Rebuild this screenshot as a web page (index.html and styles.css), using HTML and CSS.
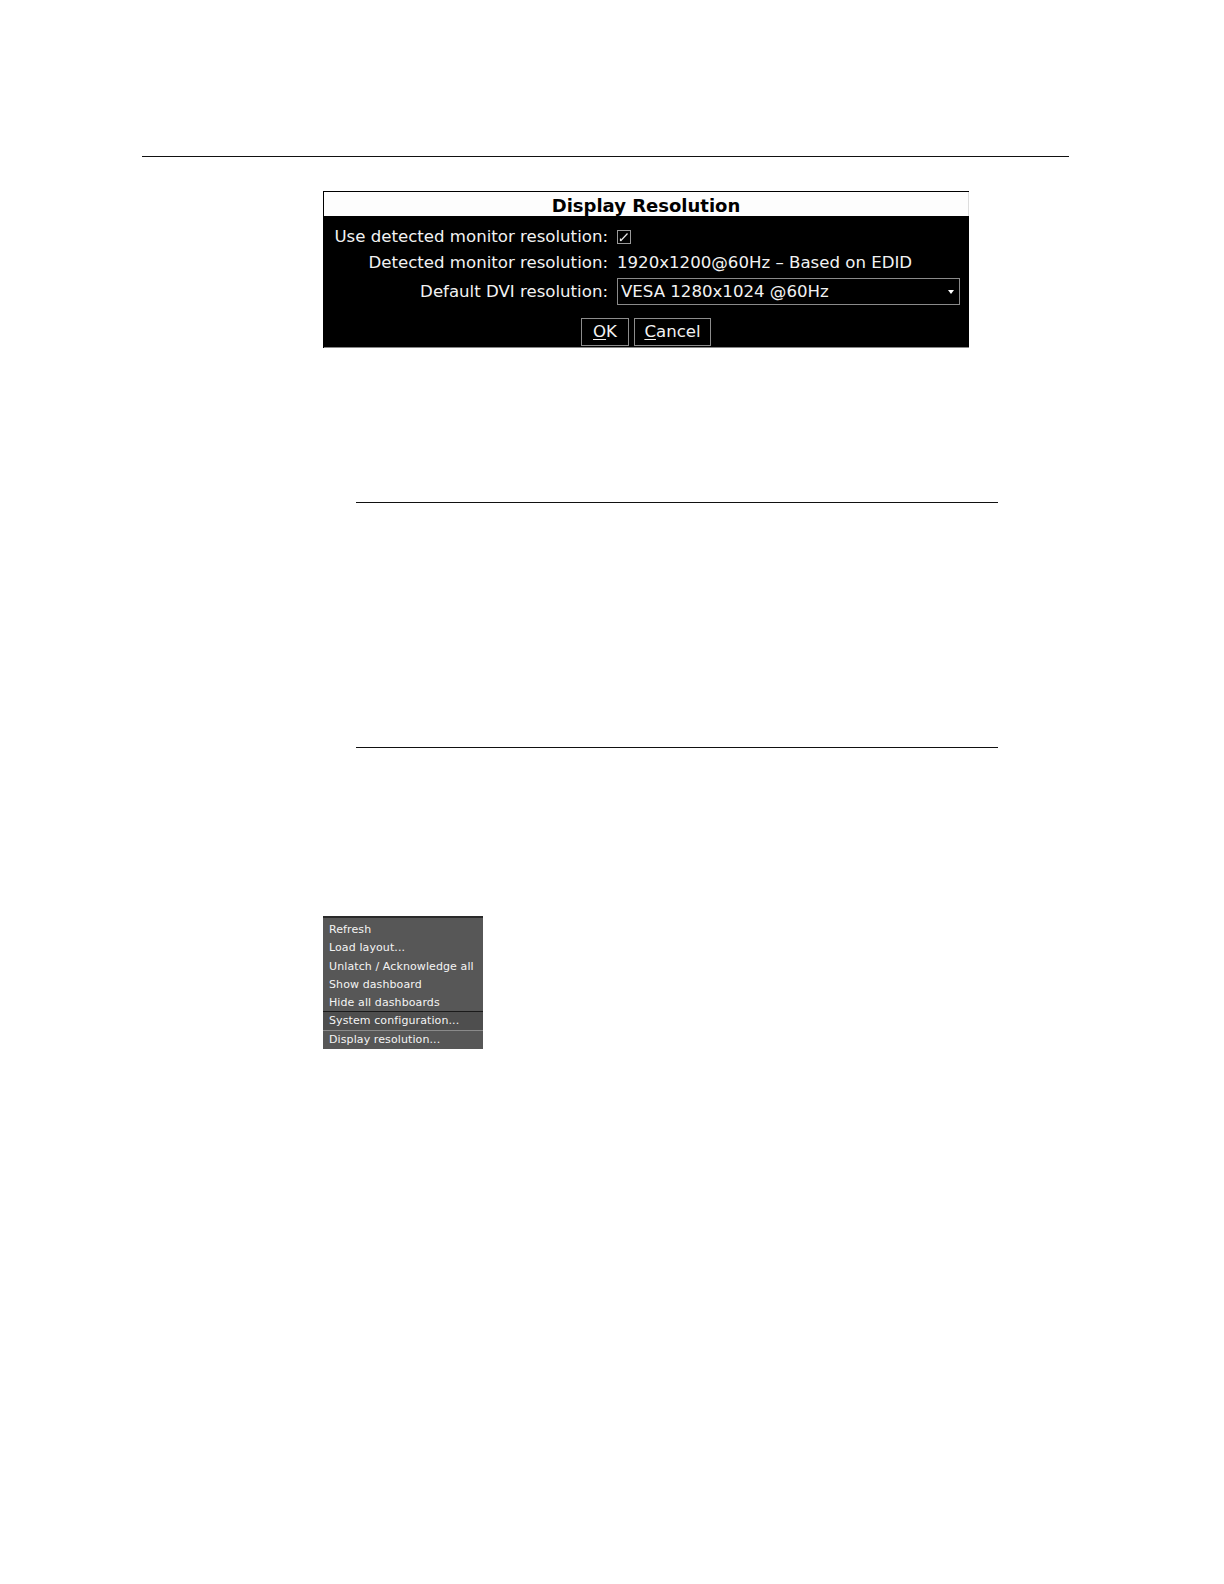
FILE: index.html
```html
<!DOCTYPE html>
<html>
<head>
<meta charset="utf-8">
<link rel="stylesheet" href="styles.css">
</head>
<body>
<div class="page">
  <div class="rule-top"></div>
  <div class="dialog">
    <div class="dialog-title">Display Resolution</div>
    <div class="dialog-body">
      <div class="form">
        <div class="label">Use detected monitor resolution:</div>
        <div class="value"><span class="checkbox"><svg width="12" height="12" viewBox="0 0 12 12"><path d="M2.5 10 L9.5 2.5" stroke="#e8e8e8" stroke-width="1.2" fill="none"/><path d="M2.5 10 L2.5 7.5" stroke="#e8e8e8" stroke-width="1.2" fill="none"/></svg></span></div>
        <div class="label">Detected monitor resolution:</div>
        <div class="value">1920x1200@60Hz – Based on EDID</div>
        <div class="label">Default DVI resolution:</div>
        <div class="value"><div class="select"><span>VESA 1280x1024 @60Hz</span><span class="arrow"></span></div></div>
      </div>
      <div class="buttons">
        <div class="btn btn-ok"><u>O</u>K</div>
        <div class="btn btn-cancel"><u>C</u>ancel</div>
      </div>
    </div>
  </div>
  <div class="section">
    <div class="rule"></div>
    <div class="section-space"></div>
    <div class="rule"></div>
  </div>
  <div class="menu">
    <div class="menu-item">Refresh</div>
    <div class="menu-item">Load layout...</div>
    <div class="menu-item">Unlatch / Acknowledge all</div>
    <div class="menu-item">Show dashboard</div>
    <div class="menu-item sep-after">Hide all dashboards</div>
    <div class="menu-item active light-after">System configuration...</div>
    <div class="menu-item">Display resolution...</div>
  </div>
</div>
</body>
</html>
```
FILE: styles.css
```css
html, body {
  margin: 0;
  padding: 0;
  background: #ffffff;
}
.page {
  padding-top: 156px;
  font-family: "DejaVu Sans", "Liberation Sans", sans-serif;
}
.rule-top {
  margin-left: 142px;
  width: 927px;
  height: 0;
  border-top: 1.5px solid #111;
}
.dialog {
  margin-left: 323px;
  margin-top: 34px;
  width: 646px;
  border-top: 1px solid #000;
  border-left: 1px solid #000;
  box-sizing: border-box;
}
.dialog-title {
  height: 24px;
  background: #fdfdfd;
  color: #000;
  text-align: center;
  font-weight: bold;
  font-size: 18px;
  line-height: 27px;
  border-right: 1px solid #ddd;
}
.dialog-body {
  background: #000;
  color: #f2f2f2;
  height: 132px;
  box-sizing: border-box;
  padding-top: 8px;
  border-bottom: 1px solid #888;
}
.form {
  display: grid;
  grid-template-columns: 284px 343px;
  column-gap: 9px;
  font-size: 16.6px;
  align-items: center;
}
.label {
  text-align: right;
  height: 26px;
  line-height: 26px;
}
.value {
  height: 26px;
  line-height: 26px;
  display: flex;
  align-items: center;
}
.form .label:nth-child(5), .form .value:nth-child(6) {
  height: 31px;
  line-height: 31px;
}
.checkbox {
  width: 12px;
  height: 12px;
  border: 1px solid #9a9a9a;
  display: inline-flex;
}
.select {
  width: 343px;
  height: 27px;
  box-sizing: border-box;
  border: 1px solid #8a8a8a;
  display: flex;
  align-items: center;
  justify-content: space-between;
  padding-left: 3px;
  padding-right: 5px;
  line-height: 25px;
}
.arrow {
  width: 0;
  height: 0;
  border-left: 3.5px solid transparent;
  border-right: 3.5px solid transparent;
  border-top: 4px solid #fff;
}
.buttons {
  display: flex;
  gap: 5px;
  margin-left: 257px;
  margin-top: 11px;
}
.btn {
  height: 28px;
  box-sizing: border-box;
  border: 1px solid #8c8c8c;
  font-size: 16.6px;
  line-height: 26px;
  text-align: center;
  color: #f2f2f2;
}
.btn-ok { width: 48px; }
.btn-cancel { width: 77px; }
.btn u { text-decoration-thickness: 1px; text-underline-offset: 2px; }
.section {
  margin-left: 356px;
  margin-top: 154px;
  width: 642px;
}
.rule {
  border-top: 1.5px solid #111;
}
.section-space {
  height: 244px;
}
.menu {
  margin-left: 323px;
  margin-top: 168px;
  width: 160px;
  background: #575757;
  border-top: 2px solid #2a2a2a;
  padding-top: 3px;
  box-sizing: border-box;
}
.menu-item {
  height: 18.3px;
  line-height: 18px;
  font-size: 11px;
  letter-spacing: 0.1px;
  color: #f4f4f4;
  padding-left: 6px;
  white-space: nowrap;
  box-sizing: border-box;
}
.menu-item.sep-after {
  border-bottom: 1px solid #1a1a1a;
}
.menu-item.active {
  background: #4e4e4e;
}
.menu-item.light-after {
  border-bottom: 1px solid #8a8a8a;
}
```
